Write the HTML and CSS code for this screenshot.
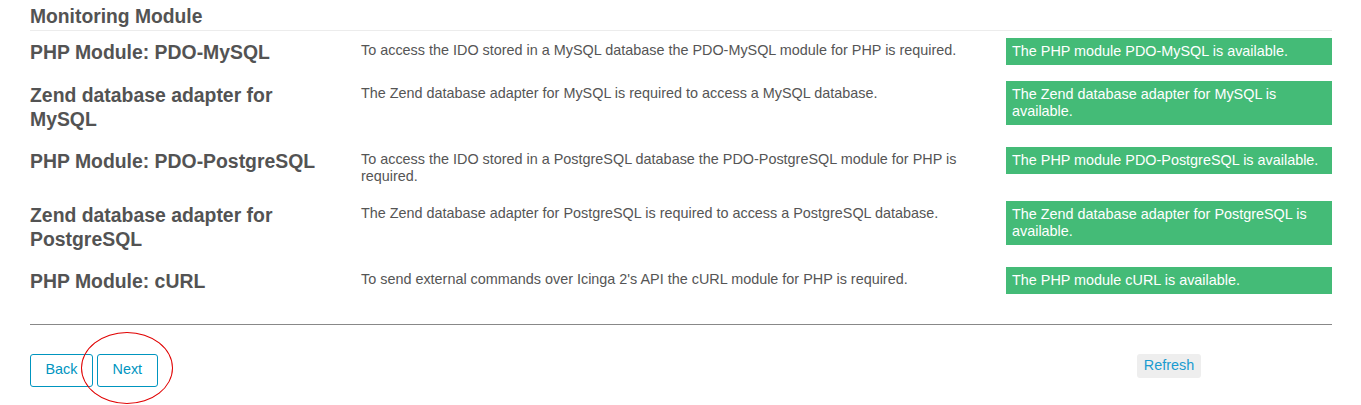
FILE: index.html
```html
<!DOCTYPE html>
<html lang="en">
<head>
<meta charset="utf-8">
<title>Requirements</title>
<link rel="stylesheet" href="styles.css">
</head>
<body>
<div class="page">
  <h2 class="module-title">Monitoring Module</h2>
  <div class="requirements">
    <h2 class="req-title">PHP Module: PDO-MySQL</h2>
    <div class="req-desc">To access the IDO stored in a MySQL database the PDO-MySQL module for PHP is required.</div>
    <div class="req-state ok">The PHP module PDO-MySQL is available.</div>

    <h2 class="req-title">Zend database adapter for MySQL</h2>
    <div class="req-desc">The Zend database adapter for MySQL is required to access a MySQL database.</div>
    <div class="req-state ok">The Zend database adapter for MySQL is available.</div>

    <h2 class="req-title">PHP Module: PDO-PostgreSQL</h2>
    <div class="req-desc">To access the IDO stored in a PostgreSQL database the PDO-PostgreSQL module for PHP is required.</div>
    <div class="req-state ok">The PHP module PDO-PostgreSQL is available.</div>

    <h2 class="req-title">Zend database adapter for PostgreSQL</h2>
    <div class="req-desc">The Zend database adapter for PostgreSQL is required to access a PostgreSQL database.</div>
    <div class="req-state ok">The Zend database adapter for PostgreSQL is available.</div>

    <h2 class="req-title">PHP Module: cURL</h2>
    <div class="req-desc">To send external commands over Icinga 2's API the cURL module for PHP is required.</div>
    <div class="req-state ok">The PHP module cURL is available.</div>
  </div>
  <hr class="separator">
  <div class="actions">
    <div class="nav-buttons">
      <button class="btn" type="button">Back</button>
      <button class="btn" type="button">Next</button>
      <span class="annotation"></span>
    </div>
    <div class="spacer"></div>
    <div class="refresh-cell">
      <button class="btn-refresh" type="button">Refresh</button>
    </div>
  </div>
</div>
</body>
</html>
```

FILE: styles.css
```css
html, body {
  margin: 0;
  padding: 0;
  background: #fff;
}

body {
  font-family: "Liberation Sans", Arial, sans-serif;
  font-size: 14.4px;
  color: #535353;
}

.page {
  padding: 5px 29px 30px 30px;
}

.module-title {
  margin: 0;
  font-size: 19.3px;
  line-height: 23px;
  font-weight: bold;
  color: #535353;
  padding-bottom: 2px;
  border-bottom: 1px solid #ececec;
}

.requirements {
  display: grid;
  grid-template-columns: 300px 614px 326px;
  column-gap: 31px;
  row-gap: 16px;
  align-items: start;
  padding-top: 7px;
}

.req-title {
  margin: 0;
  padding-top: 2px;
  font-size: 19.4px;
  line-height: 24px;
  font-weight: bold;
  color: #535353;
}

.req-desc {
  padding-top: 4px;
  line-height: 17px;
  color: #555;
}

.req-state {
  padding: 5px 6px;
  line-height: 17px;
  color: #fff;
}

.req-state.ok {
  background: #44bb77;
}

.separator {
  margin: 30px 0 0;
  border: 0;
  border-top: 1px solid #888;
  height: 0;
}

.actions {
  display: grid;
  grid-template-columns: 300px 614px 326px;
  column-gap: 31px;
  align-items: start;
  padding-top: 29px;
}

.nav-buttons {
  position: relative;
  display: flex;
  gap: 4px;
}

.btn {
  font-family: inherit;
  font-size: 14.4px;
  line-height: 17px;
  padding: 6px 14.5px 8px;
  background: #fff;
  color: #0095bf;
  border: 1px solid #0095bf;
  border-radius: 3px;
  cursor: pointer;
}

.annotation {
  position: absolute;
  left: 51px;
  top: -22px;
  width: 92px;
  height: 72px;
  box-sizing: border-box;
  border: 1px solid #e00000;
  border-radius: 50%;
  pointer-events: none;
}

.refresh-cell {
  display: flex;
  justify-content: center;
}

.btn-refresh {
  font-family: inherit;
  font-size: 14.4px;
  line-height: 17px;
  padding: 3px 7px 4px;
  background: #eee;
  color: #1a9bd0;
  border: 0;
  border-radius: 3px;
  cursor: pointer;
}
```
